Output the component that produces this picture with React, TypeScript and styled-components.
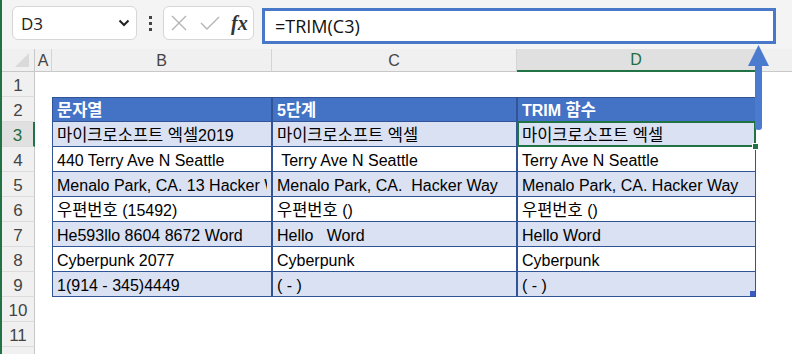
import styled, { createGlobalStyle, css } from "styled-components";
import { Fragment } from "react";

type Kind = "head" | "band" | "plain";

interface SheetRow {
    n: number;
    kind?: Kind;
    cells?: string[];
}

const rows: SheetRow[] = [
    { n: 1 },
    { n: 2, kind: "head", cells: ["문자열", "5단계", "TRIM 함수"] },
    {
        n: 3,
        kind: "band",
        cells: ["마이크로소프트 엑셀2019", "마이크로소프트 엑셀", "마이크로소프트 엑셀"],
    },
    {
        n: 4,
        kind: "plain",
        cells: ["440 Terry Ave N Seattle", " Terry Ave N Seattle", "Terry Ave N Seattle"],
    },
    {
        n: 5,
        kind: "band",
        cells: [
            "Menalo Park, CA. 13 Hacker Way",
            "Menalo Park, CA.  Hacker Way",
            "Menalo Park, CA. Hacker Way",
        ],
    },
    { n: 6, kind: "plain", cells: ["우편번호 (15492)", "우편번호 ()", "우편번호 ()"] },
    { n: 7, kind: "band", cells: ["He593llo 8604 8672 Word", "Hello   Word", "Hello Word"] },
    { n: 8, kind: "plain", cells: ["Cyberpunk 2077", "Cyberpunk", "Cyberpunk"] },
    { n: 9, kind: "band", cells: ["1(914 - 345)4449", "( - )", "( - )"] },
    { n: 10 },
    { n: 11 },
    { n: 12 },
];

const columns = ["A", "B", "C", "D", ""];
const lastVisibleRow = 11;

// korean runs get the bigger fallback size, like Excel does
const withKorean = (text: string) =>
    text.split(/([\uAC00-\uD7A3]+)/).map((part, i) =>
        /[\uAC00-\uD7A3]/.test(part) ? <Ko key={i}>{part}</Ko> : part
    );

const App = () => {
    return (
        <Page>
            <GlobalStyle />
            <Toolbar>
                <NameBox>
                    <span>D3</span>
                    <svg width="12" height="8" viewBox="0 0 12 8">
                        <polyline
                            points="1.5,1.5 6,6 10.5,1.5"
                            fill="none"
                            stroke="#222"
                            strokeWidth="2"
                        />
                    </svg>
                </NameBox>
                <Dots>
                    <i />
                    <i />
                    <i />
                </Dots>
                <FxBox>
                    <svg width="16" height="16" viewBox="0 0 16 16">
                        <path d="M1 1 L15 15 M15 1 L1 15" stroke="#b4b4b4" strokeWidth="1.4" />
                    </svg>
                    <svg width="20" height="14" viewBox="0 0 20 14">
                        <polyline
                            points="1,7 7,13 19,1"
                            fill="none"
                            stroke="#b4b4b4"
                            strokeWidth="1.4"
                        />
                    </svg>
                    <Fx>fx</Fx>
                </FxBox>
                <FormulaInput>=TRIM(C3)</FormulaInput>
            </Toolbar>

            <Sheet>
                <Corner>
                    <svg width="14" height="14" viewBox="0 0 14 14">
                        <polygon points="14,0 14,14 0,14" fill="#dadada" />
                    </svg>
                </Corner>
                {columns.map((c, i) => (
                    <ColHead key={i} $active={c === "D"} $last={i === columns.length - 1}>
                        {c}
                    </ColHead>
                ))}

                {rows.map((row) => (
                    <Fragment key={row.n}>
                        <RowHead $active={row.n === 3}>
                            {row.n <= lastVisibleRow && row.n}
                        </RowHead>
                        {row.cells && row.kind ? (
                            <>
                                <Blank />
                                {row.cells.map((text, i) => (
                                    <Cell key={i} $kind={row.kind as Kind}>
                                        <CellText>{withKorean(text)}</CellText>
                                        {row.n === 3 && i === 2 && (
                                            <Selection>
                                                <Handle />
                                            </Selection>
                                        )}
                                        {row.n === 9 && i === 2 && <ResizeMark />}
                                    </Cell>
                                ))}
                                <Blank />
                            </>
                        ) : (
                            <Blank $span />
                        )}
                    </Fragment>
                ))}
            </Sheet>

            <Arrow width="26" height="90" viewBox="0 0 26 90">
                <polygon points="2,22 12.5,1 23,22" fill="#4b7bcf" />
                <path d="M9 21 H16 V83 Q16 86 12.5 86 Q9 86 9 83 Z" fill="#4b7bcf" />
            </Arrow>
        </Page>
    );
};

const GlobalStyle = createGlobalStyle`
    html, body {
        margin: 0;
        padding: 0;
        background: #fff;
    }
    body {
        font-family: "Liberation Sans", "Noto Sans CJK KR", sans-serif;
    }
    * {
        box-sizing: border-box;
    }
`;

const Page = styled.div`
    position: relative;
    width: 792px;
    height: 354px;
    overflow: hidden;
    background: #fff;
    border-left: 2px solid #217346;
`;

const Toolbar = styled.div`
    height: 49px;
    display: flex;
    align-items: flex-start;
    padding: 6px 0 0 10px;
    background: #f4f4f4;
`;

const NameBox = styled.div`
    width: 125px;
    height: 34px;
    display: flex;
    align-items: center;
    justify-content: space-between;
    padding: 0 6px 0 8px;
    background: #fff;
    border: 1px solid #d6d6d6;
    border-radius: 6px;
    font-family: "Open Sans", sans-serif;
    font-size: 17px;
    color: #222;
`;

const Dots = styled.div`
    width: 26px;
    height: 34px;
    display: flex;
    flex-direction: column;
    align-items: center;
    justify-content: center;
    gap: 3px;
    i {
        width: 3px;
        height: 3px;
        background: #444;
    }
`;

const FxBox = styled.div`
    width: 91px;
    height: 34px;
    display: flex;
    align-items: center;
    gap: 13px;
    padding-left: 7px;
    background: #fff;
    border: 1px solid #d6d6d6;
    border-radius: 6px;
`;

const Fx = styled.span`
    font-family: "Liberation Serif", serif;
    font-style: italic;
    font-weight: 700;
    font-size: 20px;
    color: #333;
    margin-left: -2px;
`;

const FormulaInput = styled.div`
    width: 514px;
    height: 36px;
    margin: 2px 0 0 8px;
    display: flex;
    align-items: center;
    padding-left: 10px;
    background: #fff;
    border: 3px solid #4a78c8;
    font-family: "Open Sans", sans-serif;
    font-size: 18px;
    color: #111;
`;

const Sheet = styled.div`
    display: grid;
    grid-template-columns: 33px 17px 220px 245px 239px 1fr;
    grid-template-rows: 23px;
    grid-auto-rows: 25px;
`;

const Corner = styled.div`
    display: flex;
    align-items: flex-end;
    justify-content: flex-end;
    padding: 0 5px 4px 0;
    background: #f0f0f0;
    border-right: 1px solid #c8c8c8;
    border-bottom: 1px solid #c8c8c8;
`;

const ColHead = styled.div<{ $active?: boolean; $last?: boolean }>`
    display: flex;
    align-items: center;
    justify-content: center;
    padding-top: 1px;
    font-size: 16px;
    color: #444;
    background: #f0f0f0;
    border-right: ${(p) => (p.$last ? "none" : "1px solid #d4d4d4")};
    border-bottom: 1px solid #c8c8c8;
    ${(p) =>
        p.$active &&
        css`
            background: #e0e0e0;
            color: #1f6e43;
            border-bottom: 2px solid #217346;
        `}
`;

const RowHead = styled.div<{ $active?: boolean }>`
    display: flex;
    align-items: center;
    justify-content: center;
    padding-top: 4px;
    font-size: 17px;
    color: ${(p) => (p.$active ? "#1f6e43" : "#444")};
    background: ${(p) => (p.$active ? "#e0e0e0" : "#f0f0f0")};
    border-right: ${(p) => (p.$active ? "2px solid #217346" : "1px solid #c8c8c8")};
    border-bottom: 1px solid #dcdcdc;
`;

const Blank = styled.div<{ $span?: boolean }>`
    background: #fff;
    ${(p) =>
        p.$span &&
        css`
            grid-column: 2 / -1;
        `}
`;

const Cell = styled.div<{ $kind: Kind }>`
    position: relative;
    display: flex;
    min-width: 0;
    padding: 0 4px;
    font-size: 16px;
    color: #000;
    background: ${(p) =>
        p.$kind === "head" ? "#4472c4" : p.$kind === "band" ? "#d9e1f2" : "#fff"};
    border-left: 1px solid #305496;
    border-right: 1px solid #305496;
    border-bottom: 1px solid #305496;
    ${(p) =>
        p.$kind === "head" &&
        css`
            color: #fff;
            font-weight: 700;
            box-shadow: inset 0 1px 0 #305496;
        `}
`;

const CellText = styled.span`
    display: block;
    width: 100%;
    padding-top: 3px;
    line-height: 21.5px;
    overflow: hidden;
    white-space: pre;
`;

const Ko = styled.span`
    font-family: "Noto Sans CJK KR", sans-serif;
    font-size: 16.5px;
    line-height: 1;
`;

const Selection = styled.div`
    position: absolute;
    top: -1px;
    left: -1px;
    right: -1px;
    bottom: -1px;
    z-index: 2;
    border: 2px solid #217346;
`;

const Handle = styled.div`
    position: absolute;
    right: -5px;
    bottom: -5px;
    width: 7px;
    height: 7px;
    background: #217346;
    border: 1px solid #fff;
`;

const ResizeMark = styled.div`
    position: absolute;
    right: 0;
    bottom: 0;
    width: 5px;
    height: 5px;
    background: #3a5bbf;
`;

const Arrow = styled.svg`
    position: absolute;
    left: 744px;
    top: 44px;
    z-index: 3;
`;

export default App;
